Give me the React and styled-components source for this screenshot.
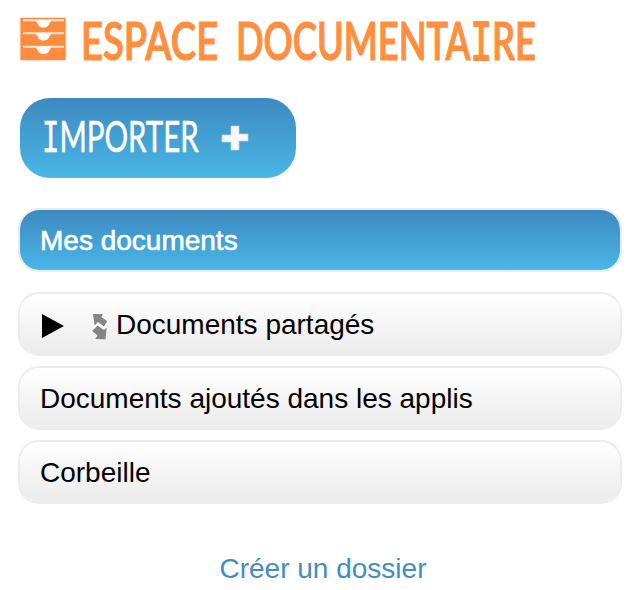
import React from "react";
import styled, { createGlobalStyle } from "styled-components";

const GlobalStyle = createGlobalStyle`
  body { margin: 0; background: #fff; font-family: "Liberation Sans", Arial, sans-serif; }
  * { box-sizing: border-box; }
`;

const Page = styled.main`
  width: 642px;
  height: 590px;
  padding: 0 20px 0 18px;
  display: flex;
  flex-direction: column;
  overflow: hidden;
`;

const Header = styled.header`
  height: 98px;
  display: flex;
  align-items: flex-start;
  svg { margin: 16px 0 0 1px; flex: none; }
`;

const Title = styled.h1`
  margin: 12px 0 0 14px;
  display: flex;
  font: 600 52px/56px Lato, sans-serif;
  color: #ff8f3f;
  white-space: pre;
`;

const TitleWord = styled.span`
  display: block;
  flex: none;
  width: ${(p) => p.$width}px;
  transform: scaleX(${(p) => p.$stretch});
  transform-origin: left;
  -webkit-text-stroke: 1.2px currentColor;
`;

const BarredI = styled.span`
  font-family: "DejaVu Sans Mono", monospace;
  font-weight: 400;
  font-size: 0.98em;
  -webkit-text-stroke: ${(p) => p.$stroke} currentColor;
`;

const ImportButton = styled.button`
  width: 276px;
  height: 80px;
  margin: 0 0 30px 2px;
  padding: 0 0 0 22px;
  border: 0;
  border-radius: 30px;
  display: flex;
  align-items: center;
  background: linear-gradient(#3d89c0, #49b7e6);
  color: #fff;
  svg { flex: none; }
`;

const ImportLabel = styled.span`
  width: 178px;
  margin-bottom: 2px;
  text-align: left;
  font: 400 43px/50px Lato, sans-serif;
  white-space: nowrap;
  transform: scaleX(${(p) => p.$stretch});
  transform-origin: left;
  -webkit-text-stroke: 0.6px currentColor;
`;

const List = styled.nav`
  display: flex;
  flex-direction: column;
  gap: 10px;
`;

const Folder = styled.a`
  height: 64px;
  width: 604px;
  padding: 1px 20px 0;
  display: flex;
  align-items: center;
  border: 2px solid #ececec;
  border-radius: 21px;
  font-size: 28px;
  line-height: 32px;
  color: ${(p) => (p.$active ? "#fff" : "#000")};
  background: ${(p) => (p.$active ? "linear-gradient(#3d89c0, #49b7e6)" : "linear-gradient(#fff, #ebebeb)")} padding-box;
  margin-bottom: ${(p) => (p.$active ? "10px" : "0")};
  -webkit-text-stroke: ${(p) => (p.$active ? "0.6px #fff" : "0")};
`;

const Arrow = styled.svg`
  margin: 3px 26px 0 2px;
`;

const Share = styled.svg`
  margin: 2px 8px 0 0;
`;

const CreateLink = styled.a`
  margin-top: 49px;
  padding-left: 6px;
  text-align: center;
  font-size: 28px;
  line-height: 32px;
  color: #438dc1;
`;

function DrawerIcon() {
  return (
    <svg width="48" height="46" viewBox="0 0 48 46">
      <rect x="0.5" y="1" width="47" height="44" rx="2" fill="#ffe0cc" />
      <rect x="1.5" y="2" width="45" height="42" fill="#ff8b3e" />
      {[4.2, 17.2, 30.8].map((y) => (
        <g key={y}>
          <path d={`M4 ${y}H45`} stroke="#ffe8d9" strokeWidth="2" />
          <path d={`M17 ${y}H32C31 ${y + 3} 29 ${y + 7.2} 25.5 ${y + 7.2}H23.5C20 ${y + 7.2} 18 ${y + 3} 17 ${y}Z`} fill="#fff" />
        </g>
      ))}
    </svg>
  );
}

export default function App() {
  return (
    <>
      <GlobalStyle />
      <Page>
        <Header>
          <DrawerIcon />
          <Title>
            <TitleWord $width={155} $stretch={0.735}>ESPACE </TitleWord>
            <TitleWord $width={300} $stretch={0.698}>
              DOCUMENTA<BarredI $stroke="1.8px">I</BarredI>RE
            </TitleWord>
          </Title>
        </Header>
        <ImportButton>
          <ImportLabel $stretch={0.685}>
            <BarredI $stroke="0.5px">I</BarredI>MPORTER
          </ImportLabel>
          <svg width="30" height="28" viewBox="0 0 30 28">
            <path d="M11 2H19V10H28V17H19V26H11V18H2V11H11Z" fill="#f7f8fa" stroke="#b8d7ea" strokeWidth="0.7" />
          </svg>
        </ImportButton>
        <List>
          <Folder $active>Mes documents</Folder>
          <Folder>
            <Arrow width="22" height="24" viewBox="0 0 22 24">
              <path d="M0 0L22 12L0 24Z" />
            </Arrow>
            <Share width="18" height="30" viewBox="0 0 18 30">
              <path
                d="M3 3H13L11.5 6L17.3 10L14 15.5L8 11L4.5 14.5ZM7.5 14.5L14 19L16.8 16.5L15.5 28.5L5 28L7.5 24.5L2 20Z"
                fill="#858585"
                stroke="#fff"
                strokeWidth="2"
                strokeLinejoin="round"
                paintOrder="stroke"
              />
            </Share>
            Documents partagés
          </Folder>
          <Folder>Documents ajoutés dans les applis</Folder>
          <Folder>Corbeille</Folder>
        </List>
        <CreateLink>Créer un dossier</CreateLink>
      </Page>
    </>
  );
}
